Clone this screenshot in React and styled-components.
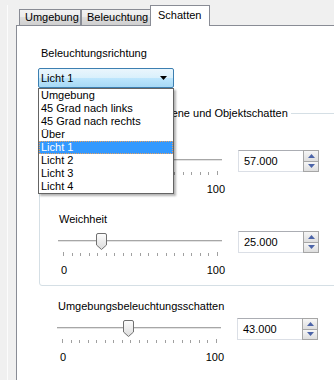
import styled, { createGlobalStyle } from "styled-components";

const GlobalStyle = createGlobalStyle`
  html, body {
    margin: 0;
    padding: 0;
    background: #f0f0f0;
    overflow: hidden;
  }
  body {
    width: 334px;
    height: 380px;
    font-family: "Liberation Sans", Arial, sans-serif;
    font-size: 11px;
    color: #000;
  }
`;

const Page = styled.div`
  padding-top: 5px;
  padding-left: 7px;
  height: 375px;
  overflow: hidden;
`;

const Window = styled.div`
  border-left: 1px solid #fcfcfc;
  padding-left: 8px;
  height: 100%;
  overflow: hidden;
`;

const TabBar = styled.div`
  display: flex;
  align-items: flex-end;
  height: 20px;
  padding-left: 3px;
`;

const Tab = styled.div`
  box-sizing: border-box;
  width: ${(p) => p.$w}px;
  height: ${(p) => (p.$active ? 21 : 16)}px;
  margin-left: ${(p) => (p.$active ? -1 : 0)}px;
  margin-bottom: ${(p) => (p.$active ? -1 : 0)}px;
  padding: ${(p) => (p.$active ? "3px 0 0 7px" : "1px 0 0 5px")};
  border: 1px solid #898c95;
  border-bottom: none;
  background: ${(p) =>
    p.$active
      ? "#fff"
      : "linear-gradient(#f2f2f2 0%, #ebebeb 50%, #dddddd 50%, #cfcfcf 100%)"};
  line-height: 13px;
  white-space: nowrap;
  position: relative;
  z-index: ${(p) => (p.$active ? 2 : 1)};
`;

const Pane = styled.div`
  width: 340px;
  height: 360px;
  box-sizing: border-box;
  background: #fff;
  border: 1px solid #898c95;
  padding: 21px 0 0 21px;
`;

const FieldLabel = styled.div`
  line-height: 13px;
  margin: 0 0 8px 3px;
`;

const ComboWrap = styled.div`
  position: relative;
  width: 136px;
  z-index: 5;
`;

const Combo = styled.div`
  box-sizing: border-box;
  height: 20px;
  display: flex;
  align-items: center;
  justify-content: space-between;
  padding: 0 6px 0 2px;
  border: 1px solid #3c7fb1;
  border-radius: 2px;
  background: linear-gradient(#eaf6fd 0%, #d9f0fc 50%, #bee6fd 50%, #a7d9f5 100%);
`;

const DropList = styled.div`
  position: absolute;
  top: 20px;
  left: 0;
  width: 136px;
  box-sizing: border-box;
  border: 1px solid #646464;
  background: #fff;
  box-shadow: 2px 2px 2px rgba(0, 0, 0, 0.3);
`;

const DropItem = styled.div`
  box-sizing: border-box;
  height: 13px;
  line-height: ${(p) => (p.$active ? 11 : 13)}px;
  padding-left: ${(p) => (p.$active ? 1 : 2)}px;
  white-space: nowrap;
  background: ${(p) => (p.$active ? "#3399ff" : "transparent")};
  color: ${(p) => (p.$active ? "#fff" : "#000")};
  border: ${(p) => (p.$active ? "1px dotted #e8a060" : "none")};
`;

const Group = styled.fieldset`
  margin: 19px 0 0 1px;
  width: 320px;
  box-sizing: border-box;
  border: 1px solid #d5dfe5;
  border-radius: 3px;
  padding: 12px 0 8px 18px;
`;

const GroupTitle = styled.legend`
  padding: 0 3px;
  margin-left: 3px;
  line-height: 13px;
`;

const SliderBlock = styled.div`
  display: grid;
  grid-template-columns: 164px 81px;
  column-gap: 16px;
  row-gap: 5px;
  margin-top: ${(p) => p.$gap || 0}px;
  padding-left: ${(p) => p.$indent || 0}px;
`;

const BlockLabel = styled.div`
  grid-column: 1 / 2;
  line-height: 13px;
  padding-left: 1px;
`;

const SliderCol = styled.div`
  display: flex;
  flex-direction: column;
`;

const SliderTrack = styled.div`
  position: relative;
  height: 20px;
`;

const Track = styled.div`
  margin-top: 9px;
  height: 1px;
  background: #a7a7a7;
  border-bottom: 1px solid #e3e3e3;
`;

const ThumbSvg = styled.svg`
  position: absolute;
  top: 2px;
`;

const TickRow = styled.div`
  display: flex;
  justify-content: space-between;
  align-items: flex-start;
  margin: 1px 4px 0 5px;
  height: 4px;
`;

const Tick = styled.div`
  width: 1px;
  height: ${(p) => (p.$end ? 4 : 3)}px;
  margin-top: ${(p) => (p.$end ? 0 : 1)}px;
  background: #a0a0a0;
`;

const RangeRow = styled.div`
  display: flex;
  justify-content: space-between;
  width: 164px;
  padding-left: 3px;
  margin-top: 8px;
  line-height: 13px;
`;

const SpinBox = styled.div`
  box-sizing: border-box;
  width: 81px;
  height: 22px;
  display: flex;
  border: 1px solid #dbdfe6;
  border-top-color: #abadb3;
  border-right: none;
  background: #fff;
`;

const SpinValue = styled.div`
  flex: 1;
  padding-left: 5px;
  line-height: 20px;
`;

const SpinButtons = styled.div`
  display: flex;
  flex-direction: column;
  width: 16px;
  margin-top: -1px;
  margin-bottom: -1px;
`;

const SpinButton = styled.div`
  flex: 1;
  display: flex;
  align-items: center;
  justify-content: center;
  border: 1px solid #a6a6a6;
  margin-top: ${(p) => (p.$down ? -1 : 0)}px;
  background: linear-gradient(#f6f6f6, #dedede);
`;

const Arrow = ({ up }) => (
  <svg width="7" height="4" viewBox="0 0 7 4">
    <path d={up ? "M0 4 L3.5 0 L7 4 Z" : "M0 0 L3.5 4 L7 0 Z"} fill="#4c64a8" />
  </svg>
);

const Thumb = ({ value }) => (
  <ThumbSvg
    width="11"
    height="17"
    viewBox="0 0 11 17"
    style={{ left: 5 + (value / 100) * 154 - 5.5 }}
  >
    <defs>
      <linearGradient id="thumbFill" x1="0" y1="0" x2="0" y2="1">
        <stop offset="0" stopColor="#fdfdfd" />
        <stop offset="1" stopColor="#dcdcdc" />
      </linearGradient>
    </defs>
    <path
      d="M0.5 2 Q0.5 0.5 2 0.5 H9 Q10.5 0.5 10.5 2 V12 L5.5 16.5 L0.5 12 Z"
      fill="url(#thumbFill)"
      stroke="#707070"
    />
  </ThumbSvg>
);

const TICKS = 19;

const Slider = ({ label, value, gap, indent }) => (
  <SliderBlock $gap={gap} $indent={indent}>
    <BlockLabel>{label}</BlockLabel>
    <span />
    <SliderCol>
      <SliderTrack>
        <Track />
        <Thumb value={value} />
      </SliderTrack>
      <TickRow>
        {Array.from({ length: TICKS }, (_, i) => (
          <Tick key={i} $end={i === 0 || i === TICKS - 1} />
        ))}
      </TickRow>
      <RangeRow>
        <span>0</span>
        <span>100</span>
      </RangeRow>
    </SliderCol>
    <SpinBox>
      <SpinValue>{value.toFixed(3)}</SpinValue>
      <SpinButtons>
        <SpinButton>
          <Arrow up />
        </SpinButton>
        <SpinButton $down>
          <Arrow />
        </SpinButton>
      </SpinButtons>
    </SpinBox>
  </SliderBlock>
);

const options = [
  "Umgebung",
  "45 Grad nach links",
  "45 Grad nach rechts",
  "Über",
  "Licht 1",
  "Licht 2",
  "Licht 3",
  "Licht 4",
];

export default function App() {
  return (
    <Page>
      <GlobalStyle />
      <Window>
        <TabBar>
          <Tab $w={62}>Umgebung</Tab>
          <Tab $w={70}>Beleuchtung</Tab>
          <Tab $w={60} $active>
            Schatten
          </Tab>
        </TabBar>
        <Pane>
          <FieldLabel>Beleuchtungsrichtung</FieldLabel>
          <ComboWrap>
            <Combo>
              <span>Licht 1</span>
              <svg width="7" height="4" viewBox="0 0 7 4">
                <path d="M0 0 L3.5 4 L7 0 Z" fill="#000" />
              </svg>
            </Combo>
            <DropList>
              {options.map((o) => (
                <DropItem key={o} $active={o === "Licht 1"}>
                  {o}
                </DropItem>
              ))}
            </DropList>
          </ComboWrap>
          <Group>
            <GroupTitle>Intensität für Bodenebene und Objektschatten</GroupTitle>
            <Slider label="Intensität" value={57} />
            <Slider label="Weichheit" value={25} gap={17} />
          </Group>
          <Slider label="Umgebungsbeleuchtungsschatten" value={43} gap={14} indent={19} />
        </Pane>
      </Window>
    </Page>
  );
}
